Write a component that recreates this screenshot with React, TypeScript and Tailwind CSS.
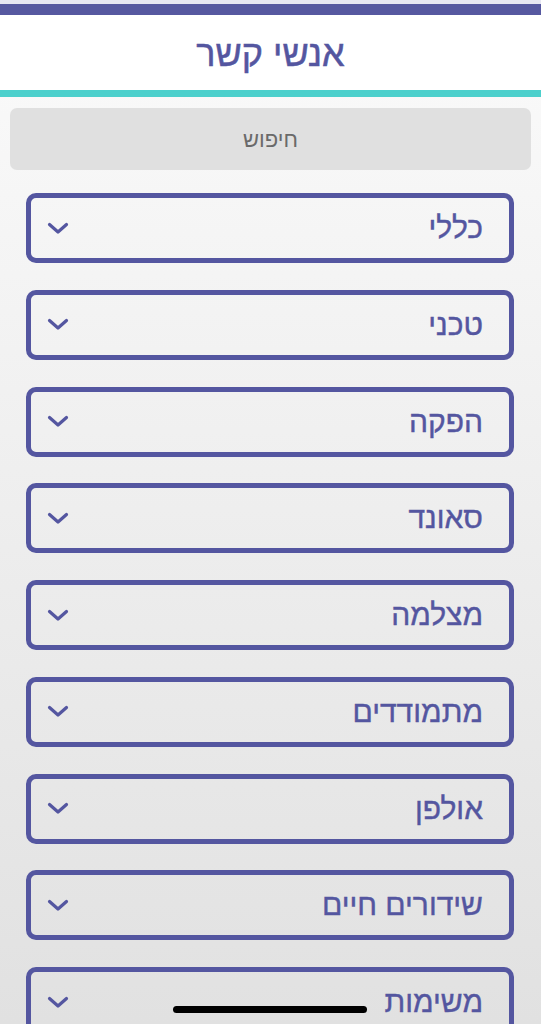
import React from "react";

const items = ["כללי", "טכני", "הפקה", "סאונד", "מצלמה", "מתמודדים", "אולפן", "שידורים חיים", "משימות"];

function Chevron() {
  return (
    <svg width="22" height="13" viewBox="0 0 22 13" fill="none">
      <path d="M2.5 2.5 L11 10 L19.5 2.5" stroke="#5456a0" strokeWidth="3.2" strokeLinecap="round" strokeLinejoin="round" />
    </svg>
  );
}

export default function App() {
  return (
    <div
      className="relative w-[541px] h-[1024px] overflow-hidden bg-gradient-to-b from-[#fbfbfb] to-[#e1e1e1]"
      style={{ fontFamily: '"Liberation Sans", "DejaVu Sans", Arial, sans-serif' }}
      dir="rtl"
    >
      <div className="h-[4px] bg-[#e6e6f2]" />
      <div className="h-[11px] bg-[#5658a0]" />
      <div className="h-[75px] bg-white flex items-center justify-center">
        <h1 className="text-[36px] leading-none text-[#5456a0] pt-[2px] [-webkit-text-stroke:0.5px_#5456a0]">אנשי קשר</h1>
      </div>
      <div className="h-[7px] bg-[#4cd0cc]" />
      <div className="px-[10px] pt-[11px]">
        <div className="h-[62px] rounded-[7px] bg-[#e0e0e0] flex items-center justify-center text-[22px] text-[#6a6a6a]">
          חיפוש
        </div>
      </div>
      <div className="flex flex-col gap-[26.75px] pt-[23px] pl-[26px] pr-[27px]">
        {items.map((t) => (
          <div
            key={t}
            className="h-[70px] shrink-0 rounded-[10px] border-[5px] border-[#5456a0] flex items-center justify-between pr-[26px] pl-[16px]"
          >
            <span className="text-[30px] text-[#5456a0] leading-none [-webkit-text-stroke:0.4px_#5456a0]">{t}</span>
            <Chevron />
          </div>
        ))}
      </div>
      <div className="absolute left-[173px] top-[1006px] w-[194px] h-[7px] rounded-full bg-black" />
    </div>
  );
}
